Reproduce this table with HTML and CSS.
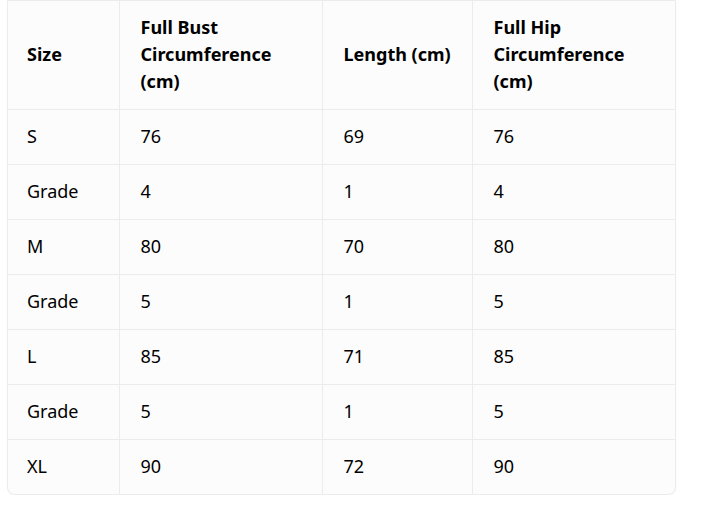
FILE: index.html
```html
<!DOCTYPE html>
<html>
<head>
<meta charset="utf-8">
<link rel="stylesheet" href="styles.css">
</head>
<body>
<div class="wrap">
<table class="size-table">
<colgroup>
<col class="c1"><col class="c2"><col class="c3"><col class="c4">
</colgroup>
<thead>
<tr><th>Size</th><th>Full Bust Circumference (cm)</th><th>Length (cm)</th><th>Full Hip Circumference (cm)</th></tr>
</thead>
<tbody>
<tr><td>S</td><td>76</td><td>69</td><td>76</td></tr>
<tr><td>Grade</td><td>4</td><td>1</td><td>4</td></tr>
<tr><td>M</td><td>80</td><td>70</td><td>80</td></tr>
<tr><td>Grade</td><td>5</td><td>1</td><td>5</td></tr>
<tr><td>L</td><td>85</td><td>71</td><td>85</td></tr>
<tr><td>Grade</td><td>5</td><td>1</td><td>5</td></tr>
<tr><td>XL</td><td>90</td><td>72</td><td>90</td></tr>
</tbody>
</table>
</div>
</body>
</html>
```
FILE: styles.css
```css
html, body {
  margin: 0;
  padding: 0;
  background: #ffffff;
}
body {
  padding: 0 0 0 7px;
  font-family: "Noto Sans", "Open Sans", sans-serif;
  font-size: 18px;
  color: #000000;
}
.wrap {
  width: 669px;
  border: 1px solid #ececec;
  border-radius: 0 0 8px 8px;
  overflow: hidden;
  background: #fcfcfc;
  box-shadow: 0 1px 2px rgba(0,0,0,0.04);
  box-sizing: border-box;
}
.size-table {
  width: 100%;
  border-collapse: collapse;
  table-layout: fixed;
}
.c1 { width: 111px; }
.c2 { width: 203px; }
.c3 { width: 150px; }
.c4 { width: auto; }
.size-table th,
.size-table td {
  text-align: left;
  padding: 13px 20px 14px 21px;
  line-height: 27px;
  vertical-align: middle;
  border-left: 1px solid #ececec;
  border-bottom: 1px solid #ececec;
}
.size-table th:first-child,
.size-table td:first-child {
  border-left: none;
  padding-left: 19px;
}
.size-table tbody tr:last-child td {
  border-bottom: none;
}
.size-table th {
  font-weight: 700;
}
.size-table td {
  font-weight: 400;
}
```
